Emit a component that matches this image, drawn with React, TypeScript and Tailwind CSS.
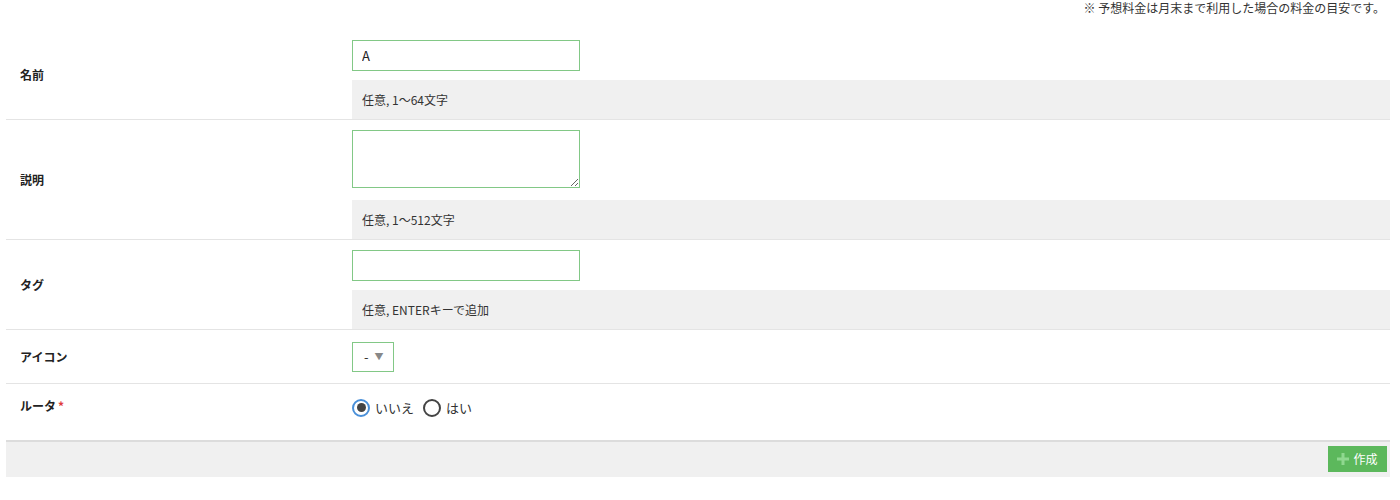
import { useState } from 'react';

const font = { fontFamily: '"Noto Sans CJK JP", "Liberation Sans", sans-serif' };

function Help({ children }: { children: React.ReactNode }) {
  return (
    <div className="h-[39px] bg-[#f0f0f0] pl-[10px] flex items-center text-[12px] text-[#333]">
      {children}
    </div>
  );
}

function Row({
  label,
  required,
  children,
}: {
  label: string;
  required?: boolean;
  children: React.ReactNode;
}) {
  return (
    <div className="flex border-b border-[#e4e4e4]">
      <div className="w-[346px] shrink-0 pl-[14px] flex items-center text-[12px] font-bold text-[#222]">
        {label}
        {required && <span className="text-[#e03c3c] ml-[2px]">*</span>}
      </div>
      <div className="flex-1">{children}</div>
    </div>
  );
}

export default function App() {
  const [router, setRouter] = useState<'no' | 'yes'>('no');

  return (
    <div className="w-[1400px] h-[500px] bg-white pl-[6px] pr-[10px]" style={font}>
      <div className="h-[30px] flex justify-end pr-[5px] text-[12px] text-[#333] leading-[16px]">
        ※ 予想料金は月末まで利用した場合の料金の目安です。
      </div>

      {/* 名前 */}
      <Row label="名前">
        <div className="pt-[10px]">
          <input
            defaultValue="A"
            className="block w-[228px] h-[31px] border border-[#82c886] px-[9px] text-[13px] text-[#222] outline-none"
          />
          <div className="h-[9px]" />
          <Help>任意, 1〜64文字</Help>
        </div>
      </Row>

      {/* 説明 */}
      <Row label="説明">
        <div className="pt-[10px]">
          <textarea className="block w-[228px] h-[58px] border border-[#82c886] px-[9px] text-[13px] outline-none" />
          <div className="h-[12px]" />
          <Help>任意, 1〜512文字</Help>
        </div>
      </Row>

      {/* タグ */}
      <Row label="タグ">
        <div className="pt-[10px]">
          <input className="block w-[228px] h-[31px] border border-[#82c886] px-[9px] text-[13px] outline-none" />
          <div className="h-[9px]" />
          <Help>任意, ENTERキーで追加</Help>
        </div>
      </Row>

      {/* アイコン */}
      <Row label="アイコン">
        <div className="pt-[12px] pb-[11px]">
          <div className="w-[42px] h-[30px] border border-[#82c886] flex items-center pl-[11px] gap-[6px] text-[13px] text-[#333]">
            <span>-</span>
            <span className="text-[9px] text-[#888]">▼</span>
          </div>
        </div>
      </Row>

      {/* ルータ */}
      <div className="flex h-[56px]">
        <div className="w-[346px] shrink-0 pl-[14px] pt-[13px] text-[12px] font-bold text-[#222]">
          ルータ<span className="text-[#e03c3c] ml-[2px]">*</span>
        </div>
        <div className="flex items-start pt-[14px] gap-[9px] text-[13px] text-[#333]">
          <label className="flex items-center gap-[5px] cursor-pointer" onClick={() => setRouter('no')}>
            <span
              className={`w-[18px] h-[18px] rounded-full border-2 flex items-center justify-center ${
                router === 'no' ? 'border-[#4a90d9]' : 'border-[#444]'
              }`}
            >
              {router === 'no' && <span className="w-[9px] h-[9px] rounded-full bg-[#444]" />}
            </span>
            いいえ
          </label>
          <label className="flex items-center gap-[5px] cursor-pointer" onClick={() => setRouter('yes')}>
            <span
              className={`w-[18px] h-[18px] rounded-full border-2 flex items-center justify-center ${
                router === 'yes' ? 'border-[#4a90d9]' : 'border-[#444]'
              }`}
            >
              {router === 'yes' && <span className="w-[9px] h-[9px] rounded-full bg-[#444]" />}
            </span>
            はい
          </label>
        </div>
      </div>

      {/* footer */}
      <div className="h-[37px] bg-[#f0f0f0] border-t-2 border-[#dcdcdc] flex justify-end items-start pt-[4px] pr-[3px]">
        <button className="h-[26px] w-[59px] bg-[#5cb85c] text-white text-[12px] flex items-center justify-center gap-[4px]">
          <svg width="12" height="12" viewBox="0 0 12 12">
            <rect x="4.5" y="0" width="3" height="12" fill="#8fd88f" />
            <rect x="0" y="4.5" width="12" height="3" fill="#8fd88f" />
          </svg>
          作成
        </button>
      </div>
    </div>
  );
}
